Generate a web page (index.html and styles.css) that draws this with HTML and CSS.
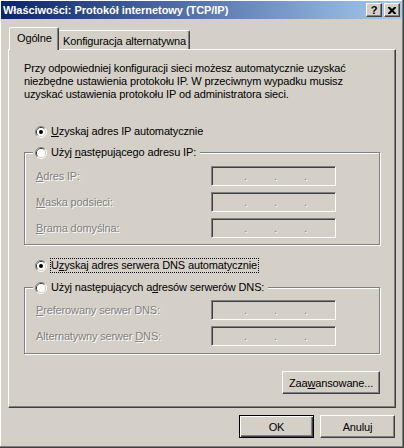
FILE: index.html
```html
<!DOCTYPE html>
<html lang="pl">
<head>
<meta charset="utf-8">
<title>Właściwości: Protokół internetowy (TCP/IP)</title>
<link rel="stylesheet" href="styles.css">
</head>
<body>
<div class="window">
  <div class="titlebar">
    <span class="title">Właściwości: Protokół internetowy (TCP/IP)</span>
    <div class="caption-buttons">
      <span class="cbtn help">?</span>
      <span class="cbtn close"><svg width="8" height="7" viewBox="0 0 8 7"><path d="M0 0h2l2 2 2-2h2v1l-2.5 2.5 2.5 2.5v1h-2l-2-2-2 2h-2v-1l2.5-2.5-2.5-2.5z" fill="#000"/></svg></span>
    </div>
  </div>
  <div class="content">
    <div class="tabs">
      <div class="tab active">Ogólne</div>
      <div class="tab">Konfiguracja alternatywna</div>
    </div>
    <div class="panel">
      <p class="desc">Przy odpowiedniej konfiguracji sieci możesz automatycznie uzyskać<br>niezbędne ustawienia protokołu IP. W przeciwnym wypadku musisz<br>uzyskać ustawienia protokołu IP od administratora sieci.</p>

      <div class="radio-row ip-auto">
        <svg class="radio" width="12" height="12" viewBox="0 0 12 12"><path d="M2.11 9.89A5.5 5.5 0 0 1 9.89 2.11" fill="none" stroke="#808080"/><path d="M9.89 2.11A5.5 5.5 0 0 1 2.11 9.89" fill="none" stroke="#fff"/><path d="M2.82 9.18A4.5 4.5 0 0 1 9.18 2.82" fill="none" stroke="#404040"/><path d="M9.18 2.82A4.5 4.5 0 0 1 2.82 9.18" fill="none" stroke="#d4d0c8"/><circle cx="6" cy="6" r="4" fill="#fff"/><circle cx="6" cy="6" r="2" fill="#000"/></svg>
        <span class="rlabel"><u>U</u>zyskaj adres IP automatycznie</span>
      </div>

      <fieldset class="group group-ip">
        <legend class="legend">
          <svg class="radio" width="12" height="12" viewBox="0 0 12 12"><path d="M2.11 9.89A5.5 5.5 0 0 1 9.89 2.11" fill="none" stroke="#808080"/><path d="M9.89 2.11A5.5 5.5 0 0 1 2.11 9.89" fill="none" stroke="#fff"/><path d="M2.82 9.18A4.5 4.5 0 0 1 9.18 2.82" fill="none" stroke="#404040"/><path d="M9.18 2.82A4.5 4.5 0 0 1 2.82 9.18" fill="none" stroke="#d4d0c8"/><circle cx="6" cy="6" r="4" fill="#fff"/></svg>
          <span class="rlabel">Użyj <u>n</u>astępującego adresu IP:</span>
        </legend>
        <div class="field"><span class="flabel"><u>A</u>dres IP:</span><div class="ipbox"><span>.</span><span>.</span><span>.</span></div></div>
        <div class="field"><span class="flabel"><u>M</u>aska podsieci:</span><div class="ipbox"><span>.</span><span>.</span><span>.</span></div></div>
        <div class="field"><span class="flabel"><u>B</u>rama domyślna:</span><div class="ipbox"><span>.</span><span>.</span><span>.</span></div></div>
      </fieldset>

      <div class="radio-row dns-auto">
        <svg class="radio" width="12" height="12" viewBox="0 0 12 12"><path d="M2.11 9.89A5.5 5.5 0 0 1 9.89 2.11" fill="none" stroke="#808080"/><path d="M9.89 2.11A5.5 5.5 0 0 1 2.11 9.89" fill="none" stroke="#fff"/><path d="M2.82 9.18A4.5 4.5 0 0 1 9.18 2.82" fill="none" stroke="#404040"/><path d="M9.18 2.82A4.5 4.5 0 0 1 2.82 9.18" fill="none" stroke="#d4d0c8"/><circle cx="6" cy="6" r="4" fill="#fff"/><circle cx="6" cy="6" r="2" fill="#000"/></svg>
        <span class="rlabel focus">U<u>z</u>yskaj adres serwera DNS automatycznie</span>
      </div>

      <fieldset class="group group-dns">
        <legend class="legend">
          <svg class="radio" width="12" height="12" viewBox="0 0 12 12"><path d="M2.11 9.89A5.5 5.5 0 0 1 9.89 2.11" fill="none" stroke="#808080"/><path d="M9.89 2.11A5.5 5.5 0 0 1 2.11 9.89" fill="none" stroke="#fff"/><path d="M2.82 9.18A4.5 4.5 0 0 1 9.18 2.82" fill="none" stroke="#404040"/><path d="M9.18 2.82A4.5 4.5 0 0 1 2.82 9.18" fill="none" stroke="#d4d0c8"/><circle cx="6" cy="6" r="4" fill="#fff"/></svg>
          <span class="rlabel">Użyj następujących a<u>d</u>resów serwerów DNS:</span>
        </legend>
        <div class="field"><span class="flabel"><u>P</u>referowany serwer DNS:</span><div class="ipbox"><span>.</span><span>.</span><span>.</span></div></div>
        <div class="field"><span class="flabel">Alternatywny serwer <u>D</u>NS:</span><div class="ipbox"><span>.</span><span>.</span><span>.</span></div></div>
      </fieldset>

      <div class="adv-row"><button class="btn adv" type="button">Zaa<u>w</u>ansowane...</button></div>
    </div>
    <div class="dialog-buttons">
      <button class="btn default" type="button">OK</button>
      <button class="btn" type="button">Anuluj</button>
    </div>
  </div>
</div>
</body>
</html>
```
FILE: styles.css
```css
html, body {
  margin: 0;
  padding: 0;
  background: #d4d0c8;
}

body {
  font-family: "Liberation Sans", Arial, sans-serif;
  font-size: 11px;
  line-height: 13px;
  letter-spacing: -0.14px;
  color: #000;
}

.window {
  width: 404px;
  height: 448px;
  box-sizing: border-box;
  padding: 1px 2px 2px 1px;
  background: #d4d0c8;
  box-shadow: inset -1px -1px 0 #404040, inset -2px -2px 0 #808080, inset 1px 1px 0 #fff;
  display: flex;
  flex-direction: column;
}

/* Title bar */
.titlebar {
  height: 18px;
  flex: none;
  display: flex;
  align-items: center;
  padding: 0 2px;
  background: linear-gradient(to right, #0a246a, #a6caf0);
}

.title {
  color: #fff;
  font-weight: bold;
  font-size: 11px;
  letter-spacing: -0.05px;
  white-space: nowrap;
}

.caption-buttons {
  margin-left: auto;
  display: flex;
}

.cbtn {
  width: 16px;
  height: 14px;
  box-sizing: border-box;
  background: #d4d0c8;
  border: 1px solid;
  border-color: #fff #404040 #404040 #fff;
  box-shadow: inset -1px -1px 0 #808080;
  display: flex;
  align-items: center;
  justify-content: center;
}

.cbtn.help {
  font-weight: bold;
  font-size: 11px;
  line-height: 12px;
  letter-spacing: 0;
  color: #000;
}

.cbtn.close {
  margin-left: 2px;
}

/* Content */
.content {
  flex: 1;
  display: flex;
  flex-direction: column;
  padding: 8px 6px 8px 7px;
}

.tabs {
  display: flex;
  align-items: flex-end;
  height: 22px;
  flex: none;
}

.tab {
  box-sizing: border-box;
  height: 19px;
  width: 131px;
  padding: 4px 0 0 4px;
  background: #d4d0c8;
  border-top: 1px solid #fff;
  border-right: 1px solid #404040;
  box-shadow: inset -1px 0 0 #808080;
  border-top-right-radius: 2px;
  white-space: nowrap;
}

.tab.active {
  position: relative;
  z-index: 1;
  width: 50px;
  height: 23px;
  margin-left: 1px;
  margin-bottom: -1px;
  padding: 4px 0 0 7px;
  border-left: 1px solid #fff;
  border-top-left-radius: 2px;
}

.panel {
  flex: 1;
  display: flex;
  flex-direction: column;
  padding: 12px 15px 13px 15px;
  border: 1px solid;
  border-color: #fff #404040 #404040 #fff;
  box-shadow: inset -1px -1px 0 #808080;
}

.desc {
  margin: 0;
  white-space: nowrap;
  line-height: 13px;
}

/* Radios */
.radio-row {
  display: flex;
  align-items: center;
  height: 15px;
}

.radio {
  flex: none;
  display: block;
}

.radio-row .radio {
  margin-left: 11px;
}

.rlabel {
  margin-left: 3px;
  padding: 0 1px 0 0;
  border: 1px solid transparent;
  line-height: 13px;
  white-space: nowrap;
}

.rlabel.focus {
  border: 1px dotted #000;
}

.ip-auto {
  margin-top: 23px;
}

.dns-auto {
  margin-top: 13px;
}

/* Group boxes */
.group {
  margin: 0;
  min-width: 0;
  padding: 6px 43px 6px 8px;
  border: 1px solid #808080;
  box-shadow: inset 1px 1px 0 #fff, 1px 1px 0 #fff;
}

.group-ip {
  margin-top: 6px;
}

.group-dns {
  margin-top: 7px;
  padding-top: 5px;
  padding-bottom: 7px;
}

.legend {
  display: flex;
  align-items: center;
  height: 15px;
  padding: 0 2px;
  background: #d4d0c8;
}

.field {
  display: grid;
  grid-template-columns: 1fr 125px;
  align-items: center;
  height: 20px;
}

.field + .field {
  margin-top: 6px;
}

.flabel {
  padding-left: 3px;
  color: #808080;
  text-shadow: 1px 1px 0 #fff;
  white-space: nowrap;
}

.ipbox {
  box-sizing: border-box;
  height: 20px;
  display: flex;
  padding-left: 32px;
  line-height: 18px;
  background: #d4d0c8;
  border: 1px solid;
  border-color: #808080 #fff #fff #808080;
  box-shadow: inset 1px 1px 0 #404040, inset -1px -1px 0 #d4d0c8;
  color: #808080;
  text-shadow: 1px 1px 0 #fff;
}

.ipbox span {
  width: 30px;
}

/* Buttons */
.btn {
  box-sizing: border-box;
  width: 75px;
  height: 23px;
  padding: 0;
  margin: 0;
  font-family: "Liberation Sans", Arial, sans-serif;
  font-size: 11px;
  letter-spacing: -0.14px;
  color: #000;
  background: #d4d0c8;
  border: 1px solid;
  border-color: #fff #404040 #404040 #fff;
  box-shadow: inset -1px -1px 0 #808080;
  border-radius: 0;
  text-align: center;
}

.btn.default {
  border: 1px solid #000;
  box-shadow: inset 1px 1px 0 #fff, inset -1px -1px 0 #404040, inset -2px -2px 0 #808080;
}

.adv-row {
  margin-top: auto;
  display: flex;
  justify-content: flex-end;
}

.btn.adv {
  width: 98px;
}

.dialog-buttons {
  flex: none;
  display: flex;
  justify-content: flex-end;
  gap: 6px;
  margin-top: 7px;
  margin-right: 1px;
}
```
